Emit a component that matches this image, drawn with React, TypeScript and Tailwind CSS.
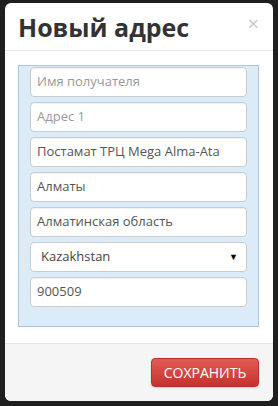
const fields = [
  { value: "", placeholder: "Имя получателя" },
  { value: "", placeholder: "Адрес 1" },
  { value: "Постамат ТРЦ Mega Alma-Ata", placeholder: "" },
  { value: "Алматы", placeholder: "" },
  { value: "Алматинская область", placeholder: "" },
];

function Field({ value, placeholder }: { value: string; placeholder: string }) {
  return (
    <div className="h-[30px] rounded-[4px] border border-[#cccccc] bg-white pl-[6px] flex items-center text-[13px] shadow-[inset_0_1px_1px_rgba(0,0,0,0.06)]">
      {value ? (
        <span className="text-[#555555]">{value}</span>
      ) : (
        <span className="text-[#999999]">{placeholder}</span>
      )}
    </div>
  );
}

export default function App() {
  return (
    <div
      className="w-[278px] h-[406px] bg-[#1f1f1f] pt-[3px] pl-[5px]"
      style={{ fontFamily: '"Open Sans", "Noto Sans", sans-serif' }}
    >
      <div className="w-[268px] h-[398px] bg-white rounded-[6px] overflow-hidden flex flex-col">
        <div className="h-[48px] border-b border-[#e5e5e5] pl-[13px] pr-[14px] flex items-center justify-between shrink-0">
          <h3 className="text-[25px] font-bold text-[#333333] leading-none pt-[2px]">Новый адрес</h3>
          <span className="text-[20px] text-[#c8c8c8] leading-none -mt-[6px]">×</span>
        </div>

        <div className="flex-1 px-[13px] pr-[14px] pt-[14px]">
          <div className="border border-[#a9c7df] bg-[#dbebf7] pt-[1px] px-[11px] pb-[19px] flex flex-col gap-[5px]">
            {fields.map((f, i) => (
              <Field key={i} value={f.value} placeholder={f.placeholder} />
            ))}
            <div className="h-[30px] rounded-[4px] border border-[#cccccc] bg-white pl-[10px] pr-[8px] flex items-center justify-between text-[13px] text-[#444444]">
              <span>Kazakhstan</span>
              <span className="text-[9px] text-black">▼</span>
            </div>
            <Field value="900509" placeholder="" />
          </div>
        </div>

        <div className="h-[58px] shrink-0 border-t border-[#e5e5e5] bg-[#f5f5f5] flex items-start justify-end pt-[14px] pr-[14px]">
          <button className="w-[108px] h-[29px] rounded-[4px] border border-[#b7302b] bg-gradient-to-b from-[#e35a55] to-[#c4322d] text-white text-[14px] shadow-[0_1px_2px_rgba(0,0,0,0.15)]">
            СОХРАНИТЬ
          </button>
        </div>
      </div>
    </div>
  );
}
